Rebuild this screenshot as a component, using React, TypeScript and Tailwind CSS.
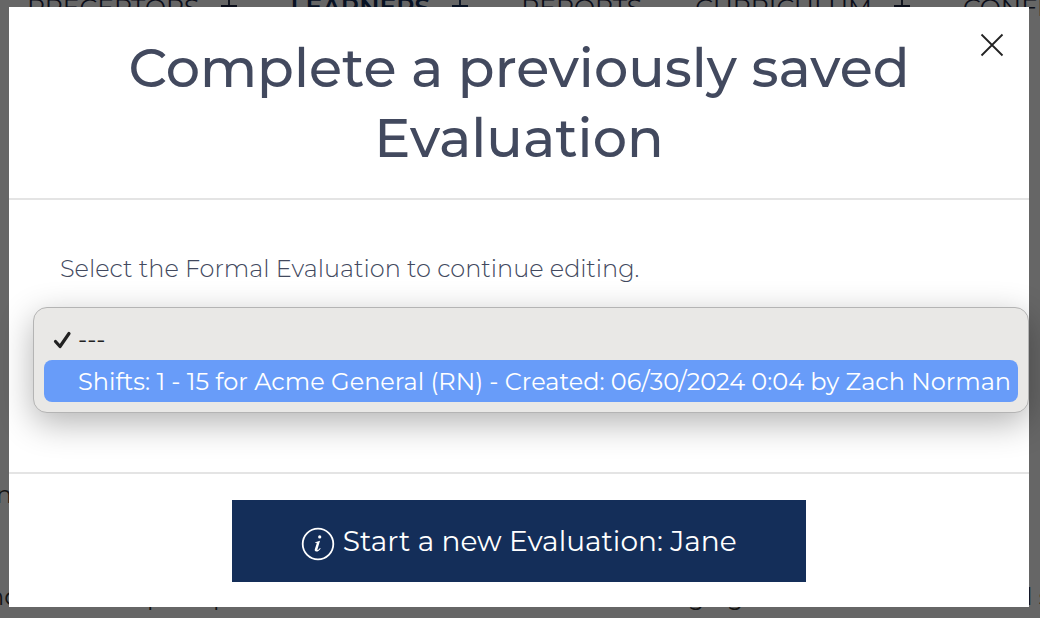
import React, { useState } from "react";

const navItems = [
  { label: "PRECEPTORS", hasMenu: true, active: false },
  { label: "LEARNERS", hasMenu: true, active: true },
  { label: "REPORTS", hasMenu: false, active: false },
  { label: "CURRICULUM", hasMenu: true, active: false },
  { label: "CONFIG", hasMenu: false, active: false },
];

const evaluations = [
  { value: "", label: "---" },
  {
    value: "1",
    label:
      "Shifts: 1 - 15 for Acme General (RN) - Created: 06/30/2024 0:04 by Zach Norman",
  },
];

const CloseIcon = () => (
  <svg
    viewBox="0 0 24 24"
    className="h-6 w-6"
    fill="none"
    stroke="currentColor"
    strokeWidth="1.8"
    aria-hidden="true"
  >
    <path d="M1.5 1.5 22.5 22.5M22.5 1.5 1.5 22.5" />
  </svg>
);

const PlusIcon = () => (
  <svg
    viewBox="0 0 16 16"
    className="mt-[6px] h-4 w-4"
    fill="none"
    stroke="currentColor"
    strokeWidth="1.8"
    aria-hidden="true"
  >
    <path d="M0 8h16M8 0v16" />
  </svg>
);

const InfoIcon = () => (
  <svg
    viewBox="0 0 34 34"
    className="inline h-[34px] w-[34px] align-middle"
    aria-hidden="true"
  >
    <circle
      cx="17"
      cy="17"
      r="15.3"
      fill="none"
      stroke="currentColor"
      strokeWidth="1.8"
    />
    <circle cx="18.7" cy="9.9" r="1.6" fill="currentColor" />
    <path
      d="M14.2 15.2c1.7-.3 3.2-.8 4.8-1.4l-2.5 8.4c-.2.8.1 1 .6.7.7-.4 1.3-1.1 1.9-1.9l.7.4c-1.2 2-2.7 3.2-4.3 3.2-1.5 0-2-.9-1.5-2.5l1.7-5.4c.2-.8-.2-.9-1.5-.8z"
      fill="currentColor"
    />
  </svg>
);

const CheckIcon = () => (
  <svg
    viewBox="0 0 20 20"
    className="h-5 w-5"
    fill="none"
    stroke="currentColor"
    strokeWidth="3.2"
    strokeLinecap="round"
    strokeLinejoin="round"
    aria-hidden="true"
  >
    <path d="M2.5 11.5 7 16.500 16 3.500" />
  </svg>
);

const PageBehind = () => (
  <div
    aria-hidden="true"
    className="flex h-full flex-col overflow-hidden bg-white text-[24px] leading-[30px] text-[#333333]"
  >
    <nav className="-mt-2 flex gap-[53px] whitespace-nowrap pl-[27px] text-[25px] text-[#1c2541]">
      {navItems.map((item) => (
        <span
          key={item.label}
          className={
            item.active
              ? "flex gap-[22px] font-semibold text-[#142e59]"
              : "flex gap-[22px]"
          }
        >
          {item.label}
          {item.hasMenu && <PlusIcon />}
        </span>
      ))}
    </nav>
    <p className="-ml-1 mt-[458px]">n</p>
    <p className="-ml-3 mt-[72px] flex whitespace-nowrap">
      <span className="w-[159px] shrink-0">nc</span>
      <span className="w-[541px] shrink-0">prompt</span>
      <span className="w-[338px] shrink-0">ging</span>
      <span>l s</span>
    </p>
  </div>
);

const App = () => {
  const [evaluation, setEvaluation] = useState("");

  return (
    <div className="relative h-screen overflow-hidden font-[Montserrat,Inter,sans-serif]">
      <PageBehind />

      <div className="absolute inset-0 bg-black/60 pb-[11px] pl-[9px] pr-[11px] pt-[7px]">
        <div
          role="dialog"
          aria-labelledby="dialog-title"
          className="relative bg-white text-[#42495e]"
        >
          <header className="border-b-2 border-[#e4e4e4] px-[100px] pb-[25px] pt-[26px] text-center">
            <h1
              id="dialog-title"
              className="text-[54px] font-medium leading-[70px]"
            >
              Complete a previously saved Evaluation
            </h1>
            <button
              type="button"
              aria-label="Close"
              className="absolute right-[25px] top-[26px] text-[#222222]"
            >
              <CloseIcon />
            </button>
          </header>

          <div className="pb-[59px] pl-6 pt-[54px]">
            <label
              htmlFor="evaluation"
              className="mb-[23px] ml-[27px] block text-[24px] font-light leading-[30px]"
            >
              Select the Formal Evaluation to continue editing.
            </label>
            <div className="relative">
              <select
                id="evaluation"
                size={2}
                value={evaluation}
                onChange={(e) => setEvaluation(e.target.value)}
                className="block h-[106px] w-full appearance-none overflow-hidden rounded-[14px] border border-[#b4b4b4] bg-[#e9e8e6] p-[10px] text-[24px] text-[#222222] shadow-[0_10px_34px_rgba(0,0,0,0.3)] outline-none"
              >
                {evaluations.map((item) => (
                  <option
                    key={item.value}
                    value={item.value}
                    className={
                      item.value === ""
                        ? "h-[42px] rounded-lg bg-[#e9e8e6] p-0 pl-[34px] pt-[7px] text-[#222222]"
                        : "h-[42px] rounded-lg bg-[#689cf9] p-0 pl-[34px] pt-[7px] text-white"
                    }
                  >
                    {item.label}
                  </option>
                ))}
              </select>
              {evaluation === "" && (
                <span className="pointer-events-none absolute left-5 top-[23px] text-[#222222]">
                  <CheckIcon />
                </span>
              )}
            </div>
          </div>

          <footer className="flex justify-center border-t-2 border-[#e4e4e4] pb-[25px] pt-[26px]">
            <button
              type="button"
              className="h-[82px] bg-[#142e59] px-[69px] text-[28px] text-white"
            >
              <InfoIcon /> Start a new Evaluation: Jane
            </button>
          </footer>
        </div>
      </div>
    </div>
  );
};

export default App;
